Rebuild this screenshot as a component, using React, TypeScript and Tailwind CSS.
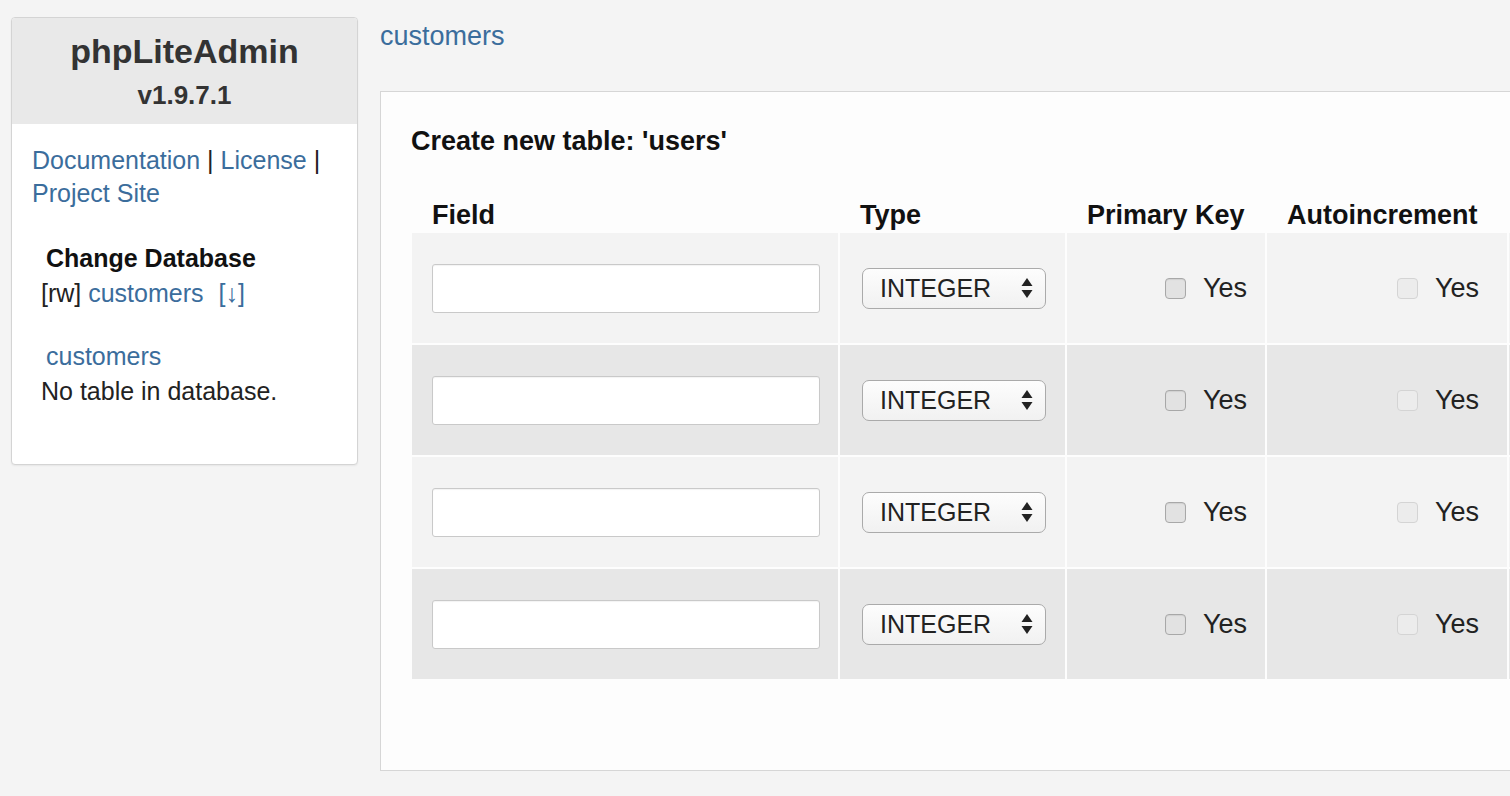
const rows = [0, 1, 2, 3];

function SelectArrows() {
  return (
    <svg width="12" height="22" viewBox="0 0 12 22" className="shrink-0">
      <path d="M6 1 L11.5 9 L0.5 9 Z" fill="#222" />
      <path d="M6 21 L11.5 13 L0.5 13 Z" fill="#222" />
    </svg>
  );
}

function Checkbox({ disabled }: { disabled?: boolean }) {
  return (
    <span
      className={`inline-block w-[21px] h-[21px] rounded-[4px] border ${
        disabled
          ? "border-[#d4d4d4] bg-[#ececec]"
          : "border-[#a8a8a8] bg-[#e2e2e2] shadow-[inset_0_1px_1px_rgba(0,0,0,0.08)]"
      }`}
    />
  );
}

export default function App() {
  return (
    <div
      className="w-[1510px] h-[796px] overflow-hidden bg-[#f4f4f4] text-[#222] flex items-start gap-[22px] pl-[11px] pt-[17px]"
      style={{ fontFamily: "'Liberation Sans', Arial, sans-serif" }}
    >
      {/* sidebar */}
      <aside className="w-[347px] h-[448px] shrink-0 rounded-[4px] border border-[#d4d4d4] bg-white shadow-[0_1px_2px_rgba(0,0,0,0.06)] overflow-hidden">
        <div className="h-[106px] bg-[#e9e9e9] flex flex-col items-center pt-[13px]">
          <h1 className="text-[34px] leading-[40px] font-bold text-[#333]">phpLiteAdmin</h1>
          <div className="text-[26px] leading-[30px] font-bold text-[#333] mt-[9px]">v1.9.7.1</div>
        </div>
        <div className="pt-[20px] pl-[20px] text-[25px] leading-[33px]">
          <div>
            <a className="text-[#3b6d9c]">Documentation</a> | <a className="text-[#3b6d9c]">License</a> |
          </div>
          <a className="text-[#3b6d9c]">Project Site</a>
        </div>
        <div className="pl-[29px] pt-[31px] text-[25px] leading-[35px]">
          <div className="ml-[5px] font-bold text-[#111]">Change Database</div>
          <div>
            [rw] <a className="text-[#3b6d9c]">customers</a>
            <a className="text-[#3b6d9c] ml-[15px]">[↓]</a>
          </div>
          <div className="ml-[5px] mt-[28px] text-[#3b6d9c]">customers</div>
          <div>No table in database.</div>
        </div>
      </aside>

      {/* main */}
      <main className="flex flex-col">
        <a className="text-[27px] leading-[31px] text-[#3b6d9c] mt-[4px]">customers</a>
        <section className="mt-[39px] w-[1200px] h-[680px] border border-[#d6d6d6] bg-[#fdfdfd] pl-[30px] pt-[34px]">
          <h2 className="text-[27px] leading-[31px] font-bold text-[#111]">Create new table: 'users'</h2>

          <div className="mt-[37px] ml-[1px] grid grid-cols-[426px_225px_198px_240px_200px] gap-[2px]">
            <div className="h-[37px] pt-[6px] pl-[20px] text-[27px] leading-[31px] font-bold text-[#111]">Field</div>
            <div className="h-[37px] pt-[6px] pl-[20px] text-[27px] leading-[31px] font-bold text-[#111]">Type</div>
            <div className="h-[37px] pt-[6px] pl-[20px] text-[27px] leading-[31px] font-bold text-[#111]">Primary Key</div>
            <div className="h-[37px] pt-[6px] pl-[20px] text-[27px] leading-[31px] font-bold text-[#111]">Autoincrement</div>
            <div className="h-[37px]" />

            {rows.map((i) => {
              const bg = i % 2 === 0 ? "bg-[#f3f3f3]" : "bg-[#e7e7e7]";
              return [
                <div key={`f${i}`} className={`h-[110px] ${bg} flex items-center pl-[20px]`}>
                  <div className="w-[388px] h-[49px] bg-white border border-[#c9c9c9] rounded-[3px] shadow-[inset_0_1px_1px_rgba(0,0,0,0.05)]" />
                </div>,
                <div key={`t${i}`} className={`h-[110px] ${bg} flex items-center pl-[22px]`}>
                  <div className="w-[184px] h-[41px] rounded-[7px] border border-[#aaaaaa] bg-gradient-to-b from-[#fdfdfd] to-[#f1f1f1] flex items-center justify-between pl-[17px] pr-[12px]">
                    <span className="text-[25px] leading-[30px] text-[#222]">INTEGER</span>
                    <SelectArrows />
                  </div>
                </div>,
                <div key={`p${i}`} className={`h-[110px] ${bg} flex items-center justify-end pr-[18px] gap-[17px]`}>
                  <Checkbox />
                  <span className="text-[27px] leading-[30px]">Yes</span>
                </div>,
                <div key={`a${i}`} className={`h-[110px] ${bg} flex items-center justify-end pr-[28px] gap-[17px]`}>
                  <Checkbox disabled />
                  <span className="text-[27px] leading-[30px]">Yes</span>
                </div>,
                <div key={`x${i}`} className={`h-[110px] ${bg}`} />,
              ];
            })}
          </div>
        </section>
      </main>
    </div>
  );
}
